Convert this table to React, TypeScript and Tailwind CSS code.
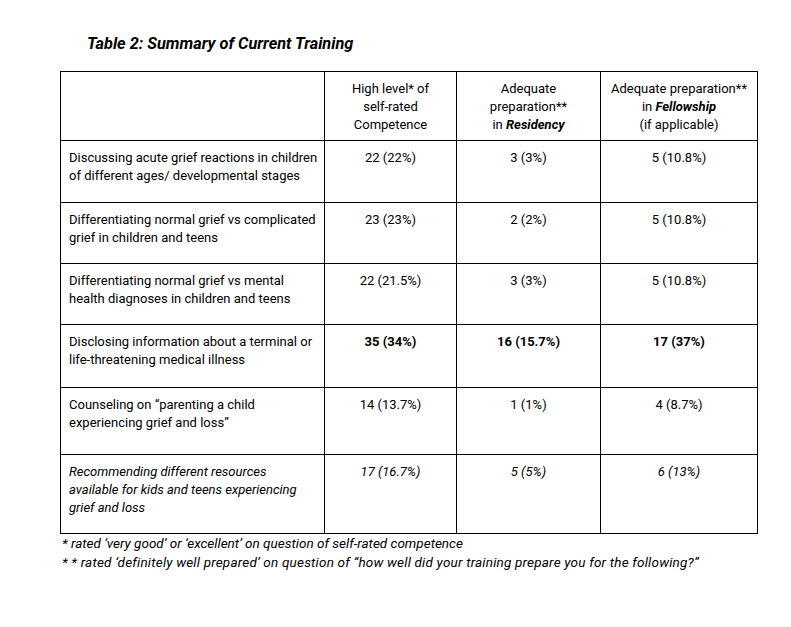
import React from "react";

const rows: { label: string[]; a: string; b: string; c: string; bold?: boolean; italic?: boolean; h: string }[] = [
  { label: ["Discussing acute grief reactions in children", "of different ages/ developmental stages"], a: "22 (22%)", b: "3 (3%)", c: "5 (10.8%)", h: "h-[62px]" },
  { label: ["Differentiating normal grief vs complicated", "grief in children and teens"], a: "23 (23%)", b: "2 (2%)", c: "5 (10.8%)", h: "h-[61px]" },
  { label: ["Differentiating normal grief vs mental", "health diagnoses in children and teens"], a: "22 (21.5%)", b: "3 (3%)", c: "5 (10.8%)", h: "h-[61px]" },
  { label: ["Disclosing information about a terminal or", "life-threatening medical illness"], a: "35 (34%)", b: "16 (15.7%)", c: "17 (37%)", bold: true, h: "h-[63px]" },
  { label: ["Counseling on \u201cparenting a child", "experiencing grief and loss\u201d"], a: "14 (13.7%)", b: "1 (1%)", c: "4 (8.7%)", h: "h-[67px]" },
  { label: ["Recommending different resources", "available for kids and teens experiencing", "grief and loss"], a: "17 (16.7%)", b: "5 (5%)", c: "6 (13%)", italic: true, h: "h-[79px]" },
];

export default function App() {
  return (
    <div className="w-[791px] h-[627px] bg-white text-black" style={{ fontFamily: "Roboto, 'Liberation Sans', sans-serif" }}>
      <div className="pt-[34px] pl-[87px] text-[16.3px] font-bold italic leading-[20px]">Table 2: Summary of Current Training</div>
      <table className="ml-[60px] mt-[17px] border-collapse text-[13px] leading-[18px] table-fixed w-[697px]">
        <colgroup>
          <col className="w-[264px]" />
          <col className="w-[132px]" />
          <col className="w-[144px]" />
          <col className="w-[157px]" />
        </colgroup>
        <thead>
          <tr className="h-[69px]">
            <th className="border border-black"></th>
            <th className="border border-black font-normal text-center align-top pt-[8px]">
              High level* of<br />self-rated<br />Competence
            </th>
            <th className="border border-black font-normal text-center align-top pt-[8px]">
              Adequate<br />preparation**<br />in <b className="italic font-bold">Residency</b>
            </th>
            <th className="border border-black font-normal text-center align-top pt-[8px]">
              Adequate preparation**<br />in <b className="italic font-bold">Fellowship</b><br />(if applicable)
            </th>
          </tr>
        </thead>
        <tbody>
          {rows.map((r, i) => (
            <tr key={i} className={r.h}>
              <td className={`border border-black align-top pt-[8px] pl-[8px] pr-[2px] whitespace-nowrap ${r.italic ? "italic" : ""}`}>
                {r.label.map((l, j) => (
                  <div key={j}>{l}</div>
                ))}
              </td>
              <td className={`border border-black align-top pt-[8px] text-center ${r.bold ? "font-bold" : ""} ${r.italic ? "italic" : ""}`}>{r.a}</td>
              <td className={`border border-black align-top pt-[8px] text-center ${r.bold ? "font-bold" : ""} ${r.italic ? "italic" : ""}`}>{r.b}</td>
              <td className={`border border-black align-top pt-[8px] text-center ${r.bold ? "font-bold" : ""} ${r.italic ? "italic" : ""}`}>{r.c}</td>
            </tr>
          ))}
        </tbody>
      </table>
      <div className="pl-[62px] text-[13.5px] italic leading-[19px] whitespace-nowrap">
        <div>* rated {"\u2018"}very good{"\u2019"} or {"\u2018"}excellent{"\u2019"} on question of self-rated competence</div>
        <div className="tracking-[0.2px]">* * rated {"\u2018"}definitely well prepared{"\u2019"} on question of {"\u201c"}how well did your training prepare you for the following?{"\u201d"}</div>
      </div>
    </div>
  );
}
